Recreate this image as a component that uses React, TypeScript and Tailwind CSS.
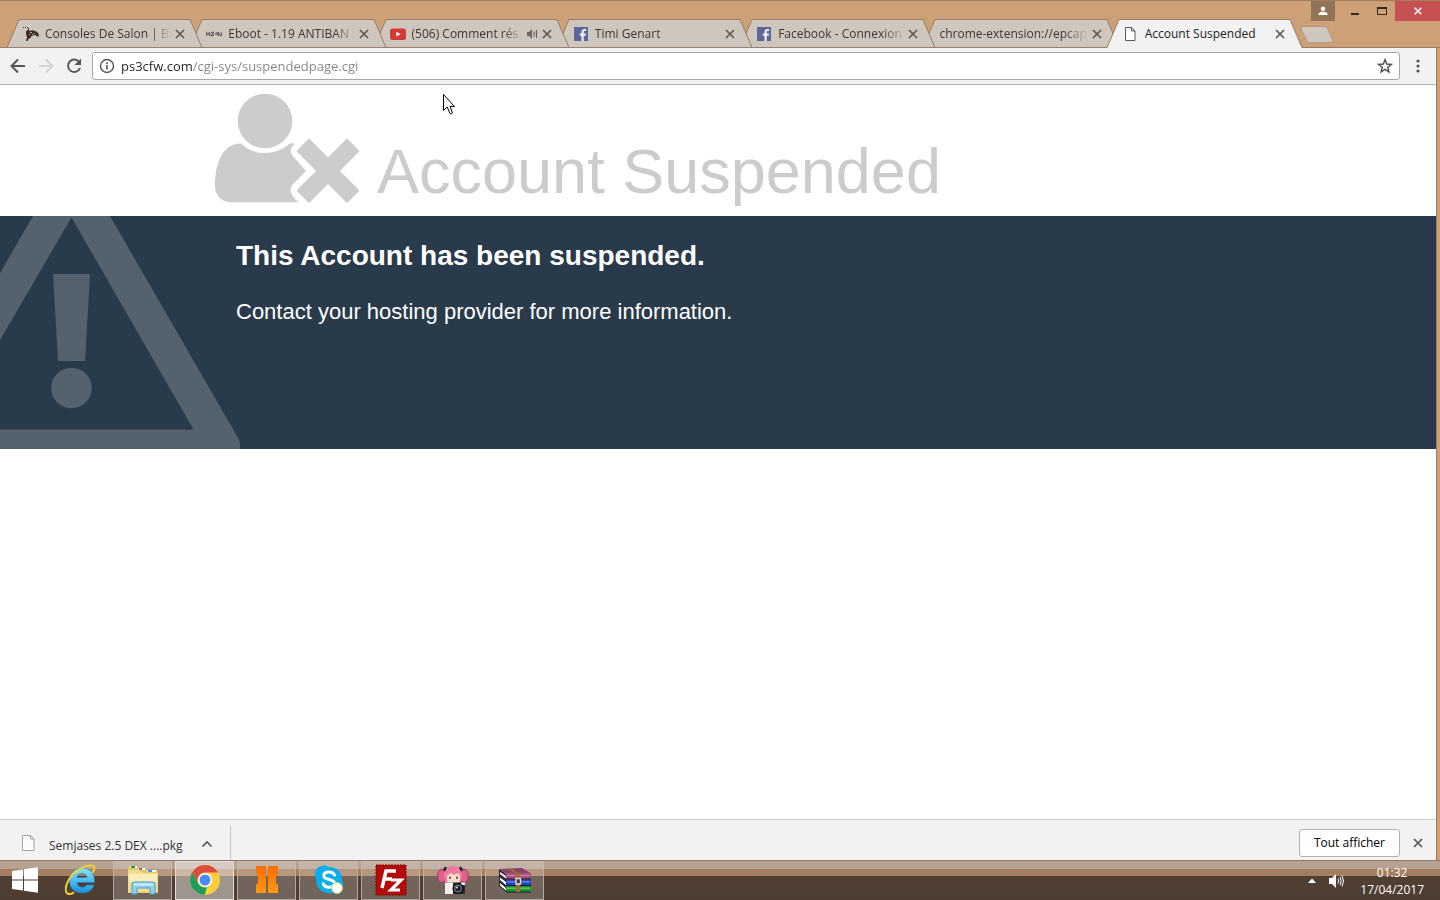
import React, { type ReactNode } from "react";
import clsx from "clsx";

type Tab = {
  title: string;
  icon?: ReactNode;
  audio?: boolean;
  active?: boolean;
  layer: string;
};

function GamepadIcon() {
  return (
    <svg viewBox="0 0 16 16" className="h-4 w-4 shrink-0" fill="#3b2f26">
      <path d="M0 1h1v1H0zM2 1h1v1H2zM4 1h1v1H4zM5 2h1v2H5zM4 4h2v2H4zM3 5h3c2-1 4-1 6 0l2 1c2 1 2 3 1.500 5l-2-1-2-1-3 1-1 2-2 1-1 2H3l1-4-1-3z" />
      <path d="M7 6h2v1H7zM11 7h1v1h-1zM6 8h1v1H6zM9 8h1v1H9zM12 9h1v1h-1z" fill="#b9aca0" />
    </svg>
  );
}

function BannerIcon() {
  return (
    <svg viewBox="0 0 16 16" className="h-4 w-4 shrink-0" fill="none" stroke="#6c6764">
      <path d="M0.500 6v4M0 8h3M3.500 6v4M5 6.500h2.500L5.500 9.500H8M9 8h1M11 6v2.500h3M12.500 6v4M15.500 6v4M14 9.500h2" strokeWidth="1.400" />
    </svg>
  );
}

function YoutubeIcon() {
  return (
    <svg viewBox="0 0 16 16" className="h-4 w-4 shrink-0">
      <rect x="0" y="2.500" width="16" height="11.500" rx="2.500" fill="#d13c34" />
      <path d="M6.300 5.800v4.600l4.200-2.300z" fill="#fff" />
    </svg>
  );
}

function FacebookIcon() {
  return (
    <svg viewBox="0 0 16 16" className="h-4 w-4 shrink-0">
      <rect x="1" y="1" width="14" height="14" fill="#5d6799" />
      <path d="M8.500 15V9.700H6.800V7.600h1.700V6c0-1.900 1.100-2.900 2.900-2.900h1.700V5h-1.300c-.8 0-1.100.4-1.100 1.100v1.500H13l-.3 2.100h-2V15z" fill="#f2efec" />
    </svg>
  );
}

function PageIcon() {
  return (
    <svg viewBox="0 0 16 16" className="h-4 w-4 shrink-0" fill="#fff" stroke="#5a5a5a">
      <path d="M2.500 1.500h6l3.500 3.500v9.500H2.500z" />
      <path d="M8.500 1.500V5H12" fill="none" />
    </svg>
  );
}

function CloseIcon({ className }: { className?: string }) {
  return (
    <svg viewBox="0 0 12 12" className={clsx("h-3 w-3", className)} fill="none" stroke="currentColor" strokeWidth="1.700">
      <path d="M2 2l8 8M10 2l-8 8" />
    </svg>
  );
}

function AudioIcon() {
  return (
    <svg viewBox="0 0 12 12" className="ml-1 h-3 w-3 shrink-0" fill="#6c655f">
      <path d="M1 4h2l3-3v10L3 8H1z" />
      <path d="M8 3.500v5M10.500 2v8" stroke="#6c655f" strokeWidth="1.200" fill="none" />
    </svg>
  );
}

function TabItem({ tab }: { tab: Tab }) {
  const fill = tab.active ? "#f2f2f2" : "#cfc6bd";
  return (
    <div className={clsx("relative -ml-3 flex h-[29px] min-w-0 flex-1 first:ml-0", tab.layer)}>
      <svg viewBox="0 0 13 29" className="h-[29px] w-[13px] shrink-0">
        <path d="M0 29L12 0.500H13V29z" fill={fill} />
        <path d="M0 28.500L12 0.500h1" fill="none" stroke="#987c66" />
        {!tab.active && <path d="M0 28.500h13" stroke="#988275" />}
      </svg>
      <div
        className={clsx(
          "flex min-w-0 flex-1 items-center border-t border-t-[#987c66] border-b",
          tab.active ? "border-b-[#f2f2f2] bg-[#f2f2f2]" : "border-b-[#988275] bg-[#cfc6bd]"
        )}
      >
        <div className="ml-[3px] flex min-w-0 flex-1 items-center gap-[6px]">
          {tab.icon}
          <span
            className={clsx(
              "min-w-0 flex-1 overflow-hidden text-xs whitespace-nowrap",
              tab.active ? "text-[#222]" : "text-[#3d3833] [mask-image:linear-gradient(to_right,#000_84%,transparent)]"
            )}
          >
            {tab.title}
          </span>
        </div>
        {tab.audio && <AudioIcon />}
        <button type="button" aria-label={`Fermer ${tab.title}`} className="mr-[3px] ml-[3px] text-[#5f5954]">
          <CloseIcon />
        </button>
      </div>
      <svg viewBox="0 0 13 29" className="h-[29px] w-[13px] shrink-0">
        <path d="M0 0.500h1L13 29H0z" fill={fill} />
        <path d="M0 0.500h1L13 28.500" fill="none" stroke="#987c66" />
        {!tab.active && <path d="M0 28.500h13" stroke="#988275" />}
      </svg>
    </div>
  );
}

const tabs: Tab[] = [
  { title: "Consoles De Salon | Bl", icon: <GamepadIcon />, layer: "z-[7]" },
  { title: "Eboot - 1.19 ANTIBAN", icon: <BannerIcon />, layer: "z-[6]" },
  { title: "(506) Comment rés", icon: <YoutubeIcon />, audio: true, layer: "z-[5]" },
  { title: "Timi Genart", icon: <FacebookIcon />, layer: "z-[4]" },
  { title: "Facebook - Connexion", icon: <FacebookIcon />, layer: "z-[3]" },
  { title: "chrome-extension://epcap", layer: "z-[2]" },
  { title: "Account Suspended", icon: <PageIcon />, active: true, layer: "z-[8]" },
];

function WindowControls() {
  return (
    <div className="flex h-[18px] items-start justify-end">
      <button type="button" aria-label="Profil" className="flex h-5 w-6 items-center justify-center bg-[#927355]">
        <svg viewBox="0 0 10 10" className="h-[10px] w-[10px]" fill="#fff">
          <circle cx="5" cy="2.800" r="2.200" />
          <path d="M0.500 9V7.500C1.500 6.300 3 5.800 5 5.800s3.500.5 4.500 1.700V9z" />
        </svg>
      </button>
      <button type="button" aria-label="Réduire" className="ml-[7px] flex h-5 w-[26px] items-center justify-center">
        <svg viewBox="0 0 10 10" className="h-[10px] w-[10px]">
          <path d="M1 7h8v2H1z" fill="#35271b" />
        </svg>
      </button>
      <button type="button" aria-label="Agrandir" className="flex h-5 w-[27px] items-center justify-center">
        <svg viewBox="0 0 10 10" className="h-[10px] w-[10px]">
          <path d="M0 1h10v8H0zM1 3v5h8V3z" fill="#35271b" fillRule="evenodd" />
        </svg>
      </button>
      <button type="button" aria-label="Fermer" className="flex h-5 w-[45px] items-center justify-center bg-[#c75050] text-white">
        <CloseIcon className="h-[10px] w-[10px]" />
      </button>
    </div>
  );
}

function Toolbar() {
  return (
    <div className="flex h-[37px] items-center border-b border-[#b5b3b2] bg-[#f2f2f2] pl-[9px]">
      <button type="button" aria-label="Retour" className="text-[#555]">
        <svg viewBox="0 0 18 18" className="h-[18px] w-[18px]" fill="none" stroke="currentColor" strokeWidth="2">
          <path d="M16 9H3M9 2.500L2.500 9 9 15.500" />
        </svg>
      </button>
      <button type="button" aria-label="Avancer" className="ml-[10px] text-[#d3d3d3]">
        <svg viewBox="0 0 18 18" className="h-[18px] w-[18px]" fill="none" stroke="currentColor" strokeWidth="2">
          <path d="M2 9h13M9 2.500L15.500 9 9 15.500" />
        </svg>
      </button>
      <button type="button" aria-label="Actualiser" className="ml-[10px] text-[#555]">
        <svg viewBox="0 0 18 18" className="h-[18px] w-[18px]">
          <path d="M14.300 5.200A6.200 6.200 0 1 0 15 11" fill="none" stroke="currentColor" strokeWidth="2" />
          <path d="M16 1.500V8H9.500z" fill="currentColor" />
        </svg>
      </button>
      <div className="ml-[9px] flex h-7 flex-1 items-center rounded-[3px] border border-[#a9a7a6] bg-white pr-[6px] pl-[6px]">
        <svg viewBox="0 0 16 16" className="h-4 w-4 shrink-0" fill="none" stroke="#555">
          <circle cx="8" cy="8" r="6.500" strokeWidth="1.400" />
          <path d="M8 7v4.500M8 4.300V6" strokeWidth="1.600" />
        </svg>
        <input
          type="text"
          aria-label="Adresse"
          defaultValue="ps3cfw.com/cgi-sys/suspendedpage.cgi"
          className="ml-[6px] min-w-0 flex-1 bg-[linear-gradient(to_right,#222_72px,#858585_72px)] bg-clip-text text-[13px] leading-5 text-transparent outline-none"
        />
        <button type="button" aria-label="Ajouter aux favoris" className="text-[#555]">
          <svg viewBox="0 0 16 16" className="h-4 w-4" fill="none" stroke="currentColor" strokeWidth="1.500">
            <path d="M8 1.800l1.700 4.300 4.600.3-3.500 3 1.100 4.500L8 11.400l-3.900 2.500 1.100-4.500-3.500-3 4.600-.3z" />
          </svg>
        </button>
      </div>
      <button type="button" aria-label="Menu" className="mr-[10px] ml-[10px] text-[#555]">
        <svg viewBox="0 0 16 16" className="h-4 w-4" fill="currentColor">
          <circle cx="8" cy="3" r="1.600" />
          <circle cx="8" cy="8" r="1.600" />
          <circle cx="8" cy="13" r="1.600" />
        </svg>
      </button>
    </div>
  );
}

function SuspendedUserIcon() {
  return (
    <svg viewBox="0 0 145 109" className="h-[109px] w-[145px] shrink-0" fill="#ccc">
      <circle cx="50" cy="27" r="27.300" />
      <path d="M26 49.500C32 55.500 40 59 50 59s18-3.500 24-9c2-1 4-1 6-.3-4 2.800-5.500 6.800-3 11.300L91 77 78 90c-5 6-2 12 6 18.300H17C7 108.300 0 102 0 92c0-20 6-42.500 26-42.500z" />
      <path
        d="M83.500 57L94 46.500l19 19 19-19L142.500 57l-19.500 20 19.500 19.500L132 107l-19-19-19 19-10.500-10.500L103 77z"
        stroke="#ccc"
        strokeWidth="3"
        strokeLinejoin="round"
      />
    </svg>
  );
}

function SuspendedPage() {
  return (
    <main className="flex-1 bg-white font-['Liberation_Sans',sans-serif]">
      <header className="flex h-[131px] items-end gap-[17px] pb-[13px] pl-[215px] text-[#ccc]">
        <SuspendedUserIcon />
        <h1 className="text-[63px] leading-[64px]">Account Suspended</h1>
      </header>
      <section className="relative h-[233px] bg-[#293a4a] pt-5 pl-[236px] text-white">
        <svg viewBox="0 0 240 233" className="absolute top-0 left-0 h-[233px] w-[240px]" fill="#54616e">
          <path d="M33 0h77l127 220q3 5 3 8v5H0v-19.500h193.500L71.500 1.500 0 124V57z" />
          <path d="M53 58h37l-5 87H58z" />
          <circle cx="71.500" cy="172" r="20.300" />
        </svg>
        <h2 className="text-[28px] leading-10 font-bold">This Account has been suspended.</h2>
        <p className="mt-5 text-[22px] leading-8">Contact your hosting provider for more information.</p>
      </section>
    </main>
  );
}

function DownloadShelf() {
  return (
    <div className="flex h-[41px] items-center border-t border-[#cfcfcf] bg-[#f2f2f2] text-xs">
      <div className="flex h-full items-center pt-3 pl-5">
        <svg viewBox="0 0 16 18" className="mb-[6px] h-[18px] w-4" fill="#fcfcfc" stroke="#a3a3a3">
          <path d="M2.500 1.500h8l3.500 3.500v11.500H2.500z" />
          <path d="M10.500 1.500V5H14" fill="none" />
        </svg>
        <span className="ml-[13px] text-[#333]">Semjases 2.5 DEX ....pkg</span>
        <button type="button" aria-label="Options" className="mr-[17px] ml-[18px] text-[#555]">
          <svg viewBox="0 0 12 12" className="mb-1 h-3 w-3" fill="none" stroke="currentColor" strokeWidth="1.600">
            <path d="M1.500 8.500L6 4l4.500 4.500" />
          </svg>
        </button>
      </div>
      <div className="mt-[6px] h-[34px] w-px bg-[#c4c4c4]" />
      <div className="ml-auto flex items-center gap-3 pt-[5px] pr-3">
        <button type="button" className="h-7 rounded-[3px] border border-[#b0b0b0] bg-white px-[14px] text-black">
          Tout afficher
        </button>
        <button type="button" aria-label="Fermer la barre" className="text-[#555]">
          <CloseIcon />
        </button>
      </div>
    </div>
  );
}

function WindowsIcon() {
  return (
    <svg viewBox="0 0 28 28" className="h-7 w-7" fill="#fff">
      <path d="M1 5l11-1.500v10H1zM13 3.300L27 1.300v12.200H13zM1 14.500h11v10L1 23zM13 14.500h14v12.200l-14-2z" />
    </svg>
  );
}

function IeIcon() {
  return (
    <svg viewBox="0 0 32 32" className="h-8 w-8">
      <defs>
        <linearGradient id="ie" x1="0" y1="0" x2="0" y2="1">
          <stop offset="0" stopColor="#8be4fb" />
          <stop offset="1" stopColor="#1593dc" />
        </linearGradient>
      </defs>
      <path
        d="M17 4C9.500 4 4.500 9.500 4.500 17c0 7 5 12 12.500 12 6 0 10.500-3 12-8h-7.500c-1 1.500-2.500 2.200-4.300 2.200-3 0-5-1.700-5.200-4.700H29.500C30 10 25.500 4 17 4zm-5 9.500c.5-2.500 2.200-4 5-4s4.500 1.500 5 4z"
        fill="url(#ie)"
        stroke="#1c7fc0"
        strokeWidth="0.600"
      />
      <path
        d="M27.500 9c2.500-4 2.500-6.700.5-7.200C22-.2 9.500 6.500 4.500 14.500 0 21.500-.5 28.500 3 29.800c2 .6 4-.2 6-1.500"
        fill="none"
        stroke="#f4cf30"
        strokeWidth="2"
      />
    </svg>
  );
}

function ExplorerIcon() {
  return (
    <svg viewBox="0 0 32 32" className="h-8 w-8">
      <path d="M1 3l1-1h8l1 3h8l1 1h10l1 3v20H1z" fill="#e3c667" />
      <path d="M3 2h7v2H3z" fill="#fff" />
      <path d="M4 2h4v2H4z" fill="#20a43a" />
      <path d="M11 4h7v2h-7z" fill="#fff" />
      <path d="M12 4h3v2h-3z" fill="#dd4b3e" />
      <path d="M20 6h9v2h-9z" fill="#fff" />
      <path d="M21 6h4v2h-4z" fill="#3d95e0" />
      <path d="M1 6h12l3 3h15v19H1z" fill="#f3dd8c" />
      <path d="M2 10h28v8H2z" fill="#f9edb9" />
      <path d="M5 30V20q0-2 2-2h19q2 0 2 2v10h-5v-6H10v6z" fill="#8bd0ef" stroke="#4b9fce" />
      <path d="M7 19.500h19v2H7z" fill="#d6f2fc" />
    </svg>
  );
}

function ChromeIcon() {
  return (
    <svg viewBox="0 0 32 32" className="h-8 w-8">
      <circle cx="16" cy="16" r="15" fill="#fbce3e" />
      <path d="M3 8.500A15 15 0 0 1 29 8.500H16A7.500 7.500 0 0 0 9.500 19.700z" fill="#dd4b3e" />
      <path d="M3 8.500L9.500 19.800A7.500 7.500 0 0 0 18 23.200L15.500 31A15 15 0 0 1 3 8.500z" fill="#1d9d58" />
      <circle cx="16" cy="16" r="7" fill="#fff" />
      <circle cx="16" cy="16" r="5.500" fill="#4a8af4" />
    </svg>
  );
}

function BlackOpsIcon() {
  return (
    <svg viewBox="0 0 32 32" className="h-8 w-8">
      <defs>
        <linearGradient id="bo" x1="0" y1="0" x2="0" y2="1">
          <stop offset="0" stopColor="#ff6a00" />
          <stop offset="1" stopColor="#ff9a16" />
        </linearGradient>
      </defs>
      <path d="M5 2h10v27H5v-8l2-2v-7l-2-2zM17 2h10v8l-2 2v7l2 2v8H17z" fill="url(#bo)" />
    </svg>
  );
}

function SkypeIcon() {
  return (
    <svg viewBox="0 0 32 32" className="h-8 w-8">
      <path d="M9 2c3-1 5 0 7 1 8 0 13 5 13 13 2 6 1 13-7 13C10 31 3 25 3 15 0 8 3 3 9 2z" fill="#0aaeed" />
      <path
        d="M21.500 11c-1-2.300-3-3-5.500-3-3.200 0-5.200 1.500-5.200 3.700 0 5 10.700 2.500 10.700 7.500 0 2.500-2.300 4-5.500 4-3 0-5-1.200-5.700-3.500"
        fill="none"
        stroke="#fff"
        strokeWidth="3"
        strokeLinecap="round"
      />
      <circle cx="24" cy="24" r="5.500" fill="#fff" stroke="#a7cf5b" />
    </svg>
  );
}

function FilezillaIcon() {
  return (
    <svg viewBox="0 0 32 32" className="h-8 w-8">
      <rect x="1" y="1" width="30" height="30" fill="#b40a0a" stroke="#7b0000" strokeDasharray="2 1" />
      <path d="M7 24L11 7h10M9 15h8" fill="none" stroke="#fff" strokeWidth="3.500" />
      <path d="M16 16h10L16 26h9" fill="none" stroke="#fff" strokeWidth="3.200" />
    </svg>
  );
}

function CameraGirlIcon() {
  return (
    <svg viewBox="0 0 32 32" className="h-8 w-8">
      <path d="M9 5C4 4 0 7 1 12c-1 3 1 6 4 7l5-4zM23 5c5-1 9 2 8 7 1 3-1 6-4 7l-5-4z" fill="#df6089" stroke="#9a3a5e" />
      <path d="M7 12C7 5 11 2 16 2s9 3 9 10l-1 6H8z" fill="#ee7a9f" />
      <path d="M9 3l-2 4M23 3l2 4" stroke="#2e2433" strokeWidth="2.500" />
      <path d="M10 12l4-3 3 2 4-2 2 3v4c0 3-3 4-7 4s-6-1-6-4z" fill="#fbdcc9" />
      <path d="M13 12.500v2.500M20 12.500v2.500" stroke="#3f6b62" strokeWidth="1.800" />
      <path d="M8 18.500h20V30H8z" fill="#2c2c30" />
      <path d="M8 18.500h8V30H8zM24 18.500h4V21h-4z" fill="#f3f1ee" />
      <circle cx="21" cy="24.500" r="5.500" fill="#121216" />
      <circle cx="21" cy="24.500" r="4" fill="#66717f" />
      <circle cx="21" cy="24.500" r="2.600" fill="#1b1e28" />
      <circle cx="20" cy="23.500" r="1" fill="#d4dbe5" />
    </svg>
  );
}

function WinrarIcon() {
  return (
    <svg viewBox="0 0 32 32" className="h-8 w-8">
      <path d="M0 5l7 5v18l-7-6z" fill="#2d2530" />
      <path d="M1 8l6 4v2.500L1 10zM1 13.500L7 18v3l-6-5zM1 19l6 5v2.500L1 21.500z" fill="#fff" />
      <path d="M0 5l23-1 9 5.500H7z" fill="#8d4068" />
      <path d="M7 9.500h25v5H7z" fill="#a84d80" />
      <path d="M7 15.500h25V21H7z" fill="#1d43c6" />
      <path d="M7 22h25v6H7z" fill="#179b22" />
      <path d="M8 11h23v1H8zM8 17h23v1.500H8zM8 23.500h23V25H8z" fill="#fff" opacity="0.350" />
      <path d="M7 15h25M7 21.500h25M7 28h25" stroke="#18162a" />
      <path d="M8 4.700l4-.2 9 5V28h-4V9.500z" fill="#9b6c3a" />
      <path d="M17 14.500h4.500V20H17z" fill="#463a30" stroke="#eadfca" strokeWidth="1.300" />
    </svg>
  );
}

const apps = [
  { name: "Explorateur", icon: <ExplorerIcon /> },
  { name: "Google Chrome", icon: <ChromeIcon />, active: true },
  { name: "Black Ops", icon: <BlackOpsIcon /> },
  { name: "Skype", icon: <SkypeIcon /> },
  { name: "FileZilla", icon: <FilezillaIcon /> },
  { name: "Capture", icon: <CameraGirlIcon /> },
  { name: "WinRAR", icon: <WinrarIcon /> },
];

function Taskbar() {
  return (
    <footer className="flex h-10 items-center bg-[linear-gradient(to_bottom,#8d7969_1px,#b5a292_1px,#b5a292_9px,#a47e61_9px,#a47e61_16px,#513f33_16px,#4e3d31_100%)]">
      <button type="button" aria-label="Démarrer" className="ml-[11px]">
        <WindowsIcon />
      </button>
      <button type="button" aria-label="Internet Explorer" className="ml-[26px]">
        <IeIcon />
      </button>
      <div className="ml-4 flex gap-[3px]">
        {apps.map((app) => (
          <button
            key={app.name}
            type="button"
            aria-label={app.name}
            className={clsx(
              "flex h-[39px] w-[59px] items-center justify-center border",
              app.active ? "border-[#e5ddd6] bg-white/45" : "border-[#c4b8ae]/80 bg-white/20"
            )}
          >
            {app.icon}
          </button>
        ))}
      </div>
      <div className="ml-auto flex items-center pt-px pr-4 text-white">
        <button type="button" aria-label="Icônes cachées">
          <svg viewBox="0 0 8 8" className="h-2 w-2" fill="#fff">
            <path d="M4 1.500L8 6H0z" />
          </svg>
        </button>
        <button type="button" aria-label="Volume" className="ml-3">
          <svg viewBox="0 0 16 16" className="h-4 w-4" fill="#fff">
            <path d="M1 5h3l4-4v14l-4-4H1z" />
            <path d="M10 5.500q1.500 2.500 0 5M12 4q2.500 4 0 8M14 2.500q3 5.500 0 11" fill="none" stroke="#fff" />
          </svg>
        </button>
        <time className="ml-4 text-center text-xs leading-[17px]">
          01:32
          <br />
          17/04/2017
        </time>
      </div>
    </footer>
  );
}

export default function App() {
  return (
    <div className="relative flex min-h-screen flex-col bg-[#cda077] font-['Open_Sans','Noto_Sans',sans-serif]">
      <div className="border-t border-[#a37c5a]">
        <WindowControls />
        <div className="flex items-start border-b border-[#987c66] pr-[105px] pl-[7px]">
          <div className="-mb-px flex min-w-0 flex-1">
            {tabs.map((tab) => (
              <TabItem key={tab.title} tab={tab} />
            ))}
          </div>
          <button type="button" aria-label="Nouvel onglet" className="mt-[7px] -ml-[2px]">
            <svg viewBox="0 0 35 17" className="h-[17px] w-[35px]">
              <path d="M2.500.5h22q2 0 3 2l5.500 12q.5 2-1.500 2h-22q-2 0-3-2l-5.500-12q-.5-2 1.500-2z" fill="#cfc6bd" stroke="#b09684" />
            </svg>
          </button>
        </div>
      </div>
      <div className="mr-[3px] flex flex-1 flex-col border-r border-[#a07a5c]">
        <Toolbar />
        <SuspendedPage />
        <DownloadShelf />
      </div>
      <Taskbar />
      <svg viewBox="0 0 12 21" className="absolute top-[94px] left-[443px] h-[21px] w-3">
        <path d="M.5.500v16l3.700-3.500 2.800 6.500q1.500 1 2.500-.5L7 12.500h4.500z" fill="#fff" stroke="#000" />
      </svg>
    </div>
  );
}
